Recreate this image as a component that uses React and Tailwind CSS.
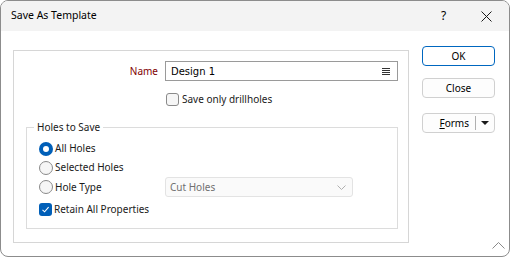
import React from 'react';

const font = { fontFamily: '"Noto Sans", "Open Sans", sans-serif' };
const inputFont = { fontFamily: '"DejaVu Sans", "Liberation Sans", sans-serif' };

const Radio = ({ checked }) =>
  checked ? (
    <span className="w-[14px] h-[14px] rounded-full bg-[#005fb8] flex items-center justify-center shrink-0">
      <span className="w-[6px] h-[6px] rounded-full bg-white" />
    </span>
  ) : (
    <span className="w-[14px] h-[14px] rounded-full border border-[#8a8a8a] bg-[#f6f6f6] shrink-0" />
  );

const Check = ({ checked }) =>
  checked ? (
    <span className="w-[13px] h-[13px] rounded-[3px] bg-[#005fb8] flex items-center justify-center shrink-0">
      <svg width="9" height="9" viewBox="0 0 9 9" fill="none">
        <path d="M1.5 4.8 L3.6 6.8 L7.6 2.2" stroke="white" strokeWidth="1.1" />
      </svg>
    </span>
  ) : (
    <span className="w-[13px] h-[13px] rounded-[3px] border border-[#8a8a8a] bg-[#f6f6f6] shrink-0" />
  );

export default function App() {
  return (
    <div
      className="w-[510px] h-[257px] border border-[#8c8c8c] rounded-[8px] overflow-hidden bg-white flex flex-col text-[10px] text-[#1a1a1a]"
      style={font}
    >
      {/* title bar */}
      <div className="h-[30px] bg-[#f3f3f3] flex items-center shrink-0">
        <span className="ml-[10px] text-[10.5px] text-black">Save As Template</span>
        <span className="ml-auto text-[12px] text-black w-[10px] mr-[30px]">?</span>
        <svg width="11" height="11" viewBox="0 0 11 11" className="mr-[17px]">
          <path d="M0.5 0.5 L10.5 10.5 M10.5 0.5 L0.5 10.5" stroke="#1a1a1a" strokeWidth="1" />
        </svg>
      </div>

      <div className="flex flex-1">
        {/* main panel */}
        <div className="ml-[12px] mt-[19px] w-[396px] h-[193px] border border-[#d6d6d6] flex flex-col">
          <div className="mt-[10px] flex items-center h-[20px]">
            <span className="w-[144px] text-right text-[#800000]">Name</span>
            <div className="ml-[7px] w-[233px] h-[20px] border border-[#9a9a9a] flex items-center px-[5px]">
              <span className="text-black" style={inputFont}>Design 1</span>
              <svg width="8" height="7" viewBox="0 0 8 7" className="ml-auto mr-[2px]">
                <path d="M0 0.5 H8 M0 2.5 H8 M0 4.5 H8 M0 6.5 H8" stroke="#333" strokeWidth="1" />
              </svg>
            </div>
          </div>

          <div className="mt-[12px] ml-[152px] flex items-center h-[13px] gap-[3px]">
            <Check />
            <span>Save only drillholes</span>
          </div>

          <fieldset className="mt-[13px] ml-[12px] w-[372px] h-[110px] border border-[#dcdcdc]">
            <legend className="ml-[7px] px-[3px] leading-[16px]">Holes to Save</legend>
            <div className="pt-[4px] pl-[12px] flex flex-col">
              <div className="h-[19px] flex items-center gap-[2px]">
                <Radio checked />
                <span>All Holes</span>
              </div>
              <div className="h-[19px] flex items-center gap-[2px]">
                <Radio />
                <span>Selected Holes</span>
              </div>
              <div className="h-[20px] flex items-center">
                <div className="w-[126px] flex items-center gap-[2px]">
                  <Radio />
                  <span>Hole Type</span>
                </div>
                <div className="w-[188px] h-[20px] border border-[#e3e3e3] rounded-[3px] bg-[#fafafa] flex items-center px-[4px]">
                  <span className="text-[#707070]">Cut Holes</span>
                  <svg width="9" height="5" viewBox="0 0 9 5" className="ml-auto mr-[2px]">
                    <path d="M0.5 0.5 L4.5 4.5 L8.5 0.5" stroke="#b0b0b0" strokeWidth="1" fill="none" />
                  </svg>
                </div>
              </div>
              <div className="mt-[3px] h-[19px] flex items-center gap-[2px]">
                <Check checked />
                <span>Retain All Properties</span>
              </div>
            </div>
          </fieldset>
        </div>

        {/* buttons */}
        <div className="ml-[13px] flex flex-col flex-1">
          <button className="mt-[15px] w-[73px] h-[20px] border border-[#0067c0] rounded-[4px] bg-white text-black leading-none">
            OK
          </button>
          <button className="mt-[12px] w-[73px] h-[20px] border border-[#d0d0d0] rounded-[4px] bg-[#fdfdfd] text-black leading-none">
            Close
          </button>
          <div className="mt-[15px] w-[73px] h-[20px] border border-[#d0d0d0] rounded-[4px] bg-[#fdfdfd] flex items-center">
            <span className="ml-auto mr-[6px] text-black">
              <span className="underline">F</span>orms
            </span>
            <span className="w-px h-[14px] bg-[#b0b0b0]" />
            <svg width="8" height="4" viewBox="0 0 8 4" className="mx-[5px]">
              <path d="M0 0 H8 L4 4 Z" fill="#1a1a1a" />
            </svg>
          </div>
          <svg width="13" height="7" viewBox="0 0 13 7" className="mt-auto mb-[7px] self-end mr-[4px]">
            <path d="M0.5 6.5 L6.5 0.5 L12.5 6.5" stroke="#8a8a8a" strokeWidth="1" fill="none" />
          </svg>
        </div>
      </div>
    </div>
  );
}
